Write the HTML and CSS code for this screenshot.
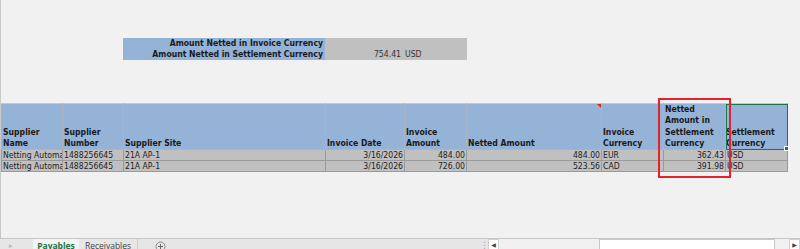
FILE: index.html
```
<!DOCTYPE html>
<html lang="en">
<head>
    <meta charset="UTF-8">
    <meta name="viewport" content="width=device-width, initial-scale=1.0">
    <title>Payables</title>
    <link rel="stylesheet" href="styles.css">
</head>
<body>
    <div class="sheet">
        <div class="summary">
            <div class="sum-labels">
                <div>Amount Netted in Invoice Currency</div>
                <div>Amount Netted in Settlement Currency</div>
            </div>
            <div class="sum-amount">
                <div>&nbsp;</div>
                <div>754.41</div>
            </div>
            <div class="sum-currency">
                <div>&nbsp;</div>
                <div>USD</div>
            </div>
        </div>

        <table class="netting">
            <colgroup>
                <col style="width:61px">
                <col style="width:61px">
                <col style="width:202px">
                <col style="width:79px">
                <col style="width:62px">
                <col style="width:135px">
                <col style="width:62px">
                <col style="width:62px">
                <col style="width:62px">
            </colgroup>
            <thead>
                <tr>
                    <th>Supplier Name</th>
                    <th>Supplier Number</th>
                    <th>Supplier Site</th>
                    <th>Invoice Date</th>
                    <th>Invoice Amount</th>
                    <th class="has-comment">Netted Amount</th>
                    <th>Invoice Currency</th>
                    <th>Netted Amount in Settlement Currency</th>
                    <th class="selected">Settlement Currency<span class="handle"></span></th>
                </tr>
            </thead>
            <tbody id="rows"></tbody>
        </table>

        <div class="highlight"></div>
    </div>

    <div class="tabbar">
        <div class="tab-nav">&#9656;</div>
        <div class="tab active">Payables</div>
        <div class="tab">Receivables</div>
        <div class="tab-add">
            <svg width="11" height="11" viewBox="0 0 11 11"><circle cx="5.5" cy="5.5" r="4.5" fill="none" stroke="#8a8a8a" stroke-width="1"/><path d="M5.5 3v5M3 5.5h5" stroke="#6a6a6a" stroke-width="1"/></svg>
        </div>
        <div class="tab-fill"></div>
        <div class="splitter">&#8942;</div>
        <div class="hscroll">
            <div class="arrow">&#9664;</div>
            <div class="track">
                <div class="thumb"></div>
            </div>
            <div class="arrow">&#9654;</div>
        </div>
    </div>

    <script>
        // Netting lines for the payables sheet
        const lines = [
            { name: "Netting Automation", number: "1488256645", site: "21A AP-1", date: "3/16/2026", amount: "484.00", netted: "484.00", currency: "EUR", settled: "362.43", settleCurrency: "USD" },
            { name: "Netting Automation", number: "1488256645", site: "21A AP-1", date: "3/16/2026", amount: "726.00", netted: "523.56", currency: "CAD", settled: "391.98", settleCurrency: "USD" }
        ];

        const tbody = document.getElementById('rows');
        lines.forEach(line => {
            const tr = document.createElement('tr');
            tr.innerHTML = `
                <td class="clip">${line.name}</td>
                <td>${line.number}</td>
                <td>${line.site}</td>
                <td class="num">${line.date}</td>
                <td class="num">${line.amount}</td>
                <td class="num">${line.netted}</td>
                <td>${line.currency}</td>
                <td class="num">${line.settled}</td>
                <td>${line.settleCurrency}</td>
            `;
            tbody.appendChild(tr);
        });
    </script>
</body>
</html>
```

FILE: styles.css
```
body {
    margin: 0;
    background-color: #f1f1f1;
    font-family: "DejaVu Sans Condensed", "DejaVu Sans", sans-serif;
    font-stretch: condensed;
    font-size: 8.6px;
    color: #1a1a1a;
    overflow: hidden;
    height: 249px;
}
.sheet {
    position: relative;
    height: 238px;
    border-left: 1px solid #c8c8c8;
    box-sizing: border-box;
    padding-top: 38px;
}
.summary {
    display: flex;
    margin-left: 122px;
    line-height: 11px;
}
.sum-labels {
    width: 202px;
    background-color: #95b3d7;
    text-align: right;
    font-weight: bold;
    padding-right: 2px;
    box-sizing: border-box;
}
.sum-amount {
    width: 79px;
    background-color: #c0c0c0;
    text-align: right;
    padding-right: 3px;
    box-sizing: border-box;
    color: #333;
}
.sum-currency {
    width: 62px;
    background-color: #c0c0c0;
    padding-left: 1px;
    color: #333;
}
.netting {
    margin-top: 43px;
    border-collapse: collapse;
    table-layout: fixed;
    width: 786px;
}
.netting th,
.netting td {
    padding: 0 1px;
    white-space: nowrap;
    overflow: hidden;
    text-align: left;
}
.netting th {
    height: 44px;
    background-color: #95b3d7;
    border: 1px solid #a9b5c4;
    border-top-color: #c8c8c8;
    vertical-align: bottom;
    font-weight: bold;
    white-space: normal;
    line-height: 11.3px;
    position: relative;
    overflow: visible;
}
.netting td {
    height: 10px;
    line-height: 10px;
    background-color: #c0c0c0;
    border: 1px solid #9a9a9a;
    color: #222;
}
.netting td.num {
    text-align: right;
}
.netting td.clip {
    text-overflow: clip;
}
.has-comment::after {
    content: "";
    position: absolute;
    top: 0;
    right: 0;
    border-top: 4px solid #e0201c;
    border-left: 4px solid transparent;
}
.netting th.selected {
    outline: 1px solid #217346;
    outline-offset: -1px;
    padding-left: 0;
}
.handle {
    position: absolute;
    right: -2px;
    bottom: -2px;
    width: 3px;
    height: 3px;
    background-color: #217346;
    border: 1px solid #fff;
}
.highlight {
    position: absolute;
    left: 657px;
    top: 98px;
    width: 69px;
    height: 76px;
    border: 2px solid #e3222b;
}
.tabbar {
    display: flex;
    height: 22px;
    border-top: 1px solid #c6c6c6;
    background-color: #e6e6e6;
    color: #444;
    font-family: "Open Sans", "DejaVu Sans", sans-serif;
    font-stretch: normal;
    font-size: 8.5px;
}
.tab-nav {
    width: 33px;
    padding-left: 9px;
    box-sizing: border-box;
    color: #b8b8b8;
    font-size: 7px;
    line-height: 14px;
}
.tab {
    width: 59px;
    box-sizing: border-box;
    padding-top: 0;
    line-height: 13px;
    text-align: center;
    border-right: 1px solid #cfcfcf;
}
.tab.active {
    background-color: #f4f4f4;
    color: #217346;
    font-weight: bold;
    width: 46px;
    border-right: none;
}
.tab-add {
    padding: 2px 0 0 17px;
}
.tab-fill {
    flex: 1;
}
.splitter {
    width: 8px;
    color: #aaa;
    line-height: 12px;
    font-size: 9px;
}
.hscroll {
    display: flex;
    width: 312px;
    background-color: #f0f0f0;
}
.arrow {
    width: 11px;
    height: 12px;
    box-sizing: border-box;
    border: 1px solid #d0d0d0;
    background-color: #fdfdfd;
    font-size: 6px;
    line-height: 11px;
    text-align: center;
    color: #444;
}
.track {
    flex: 1;
    padding-left: 100px;
    padding-right: 14px;
}
.thumb {
    height: 12px;
    box-sizing: border-box;
    border: 1px solid #c8c8c8;
    background-color: #fff;
}
```
